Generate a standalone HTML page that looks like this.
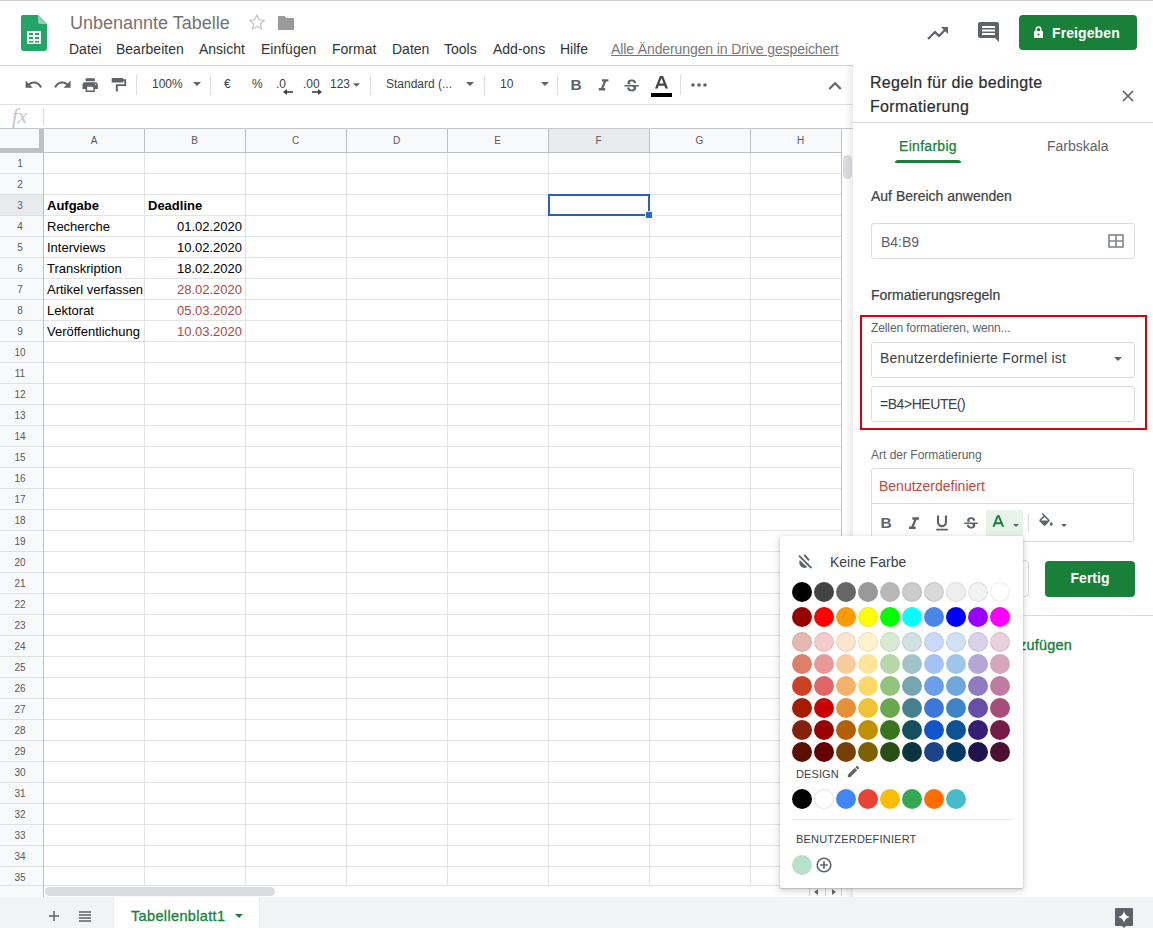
<!DOCTYPE html>
<html><head><meta charset="utf-8">
<style>
*{margin:0;padding:0;box-sizing:border-box}
html,body{width:1153px;height:928px;overflow:hidden;background:#fff;font-family:"Liberation Sans",sans-serif;position:relative}
.a{position:absolute}
.t{position:absolute;white-space:nowrap}
svg{position:absolute;overflow:visible}
</style></head><body>
<!-- top line -->
<div class="a" style="left:0;top:0;width:1153px;height:1px;background:#d0d0d0"></div>

<!-- HEADER -->
<svg style="left:21px;top:15px" width="26" height="36" viewBox="0 0 26 36">
  <path d="M2 0H17L26 9V33A3 3 0 0 1 23 36H3A3 3 0 0 1 0 33V2A2 2 0 0 1 2 0Z" fill="#23a566"/>
  <path d="M17 0L26 9H19A2 2 0 0 1 17 7Z" fill="#8ed1b1"/>
  <rect x="6" y="16" width="14" height="13" fill="#f1f1f1"/>
  <rect x="8" y="18" width="4" height="2" fill="#23a566"/><rect x="14" y="18" width="4" height="2" fill="#23a566"/>
  <rect x="8" y="22" width="4" height="2" fill="#23a566"/><rect x="14" y="22" width="4" height="2" fill="#23a566"/>
  <rect x="8" y="26" width="4" height="1.5" fill="#23a566"/><rect x="14" y="26" width="4" height="1.5" fill="#23a566"/>
</svg>
<div class="t" style="left:70px;top:13px;font-size:18px;color:#737373">Unbenannte Tabelle</div>
<svg style="left:248px;top:13px" width="18" height="18" viewBox="0 0 24 24"><path d="M12 2.5l2.9 6.6 7.1.6-5.4 4.7 1.6 7-6.2-3.7-6.2 3.7 1.6-7L2 9.7l7.1-.6z" fill="none" stroke="#c4c4c4" stroke-width="1.6" stroke-linejoin="round"/></svg>
<svg style="left:278px;top:16px" width="16" height="14" viewBox="0 0 16 14"><path d="M0 0.6A0.6 0.6 0 0 1 0.6 0H6.5L8.3 2H15.4A0.6 0.6 0 0 1 16 2.6V13.4A0.6 0.6 0 0 1 15.4 14H0.6A0.6 0.6 0 0 1 0 13.4Z" fill="#9a9a9a"/></svg>

<div class="t" style="left:69px;top:41px;font-size:14px;color:#333">Datei</div>
<div class="t" style="left:116px;top:41px;font-size:14px;color:#333">Bearbeiten</div>
<div class="t" style="left:199px;top:41px;font-size:14px;color:#333">Ansicht</div>
<div class="t" style="left:261px;top:41px;font-size:14px;color:#333">Einfügen</div>
<div class="t" style="left:332px;top:41px;font-size:14px;color:#333">Format</div>
<div class="t" style="left:392px;top:41px;font-size:14px;color:#333">Daten</div>
<div class="t" style="left:444px;top:41px;font-size:14px;color:#333">Tools</div>
<div class="t" style="left:493px;top:41px;font-size:14px;color:#333">Add-ons</div>
<div class="t" style="left:560px;top:41px;font-size:14px;color:#333">Hilfe</div>
<div class="t" style="left:611px;top:41px;font-size:14px;color:#777;letter-spacing:-0.1px;text-decoration:underline">Alle Änderungen in Drive gespeichert</div>

<!-- right header icons -->
<svg style="left:927px;top:26px" width="22" height="14" viewBox="0 0 22 14"><path d="M1 13L8 6L12 10L19 3" stroke="#5f6368" stroke-width="2.2" fill="none"/><path d="M14 1H21V8Z" fill="#5f6368"/></svg>
<svg style="left:978px;top:22px" width="21" height="20" viewBox="0 0 21 20"><path d="M2 0H19A2 2 0 0 1 21 2V20L17 16H2A2 2 0 0 1 0 14V2A2 2 0 0 1 2 0Z" fill="#5f6368"/><rect x="4" y="4" width="13" height="2" fill="#fff"/><rect x="4" y="7.5" width="13" height="2" fill="#fff"/><rect x="4" y="11" width="13" height="2" fill="#fff"/></svg>
<div class="a" style="left:1019px;top:15px;width:118px;height:35px;background:#188038;border-radius:4px"></div>
<svg style="left:1034px;top:26px" width="9" height="12" viewBox="0 0 9 12"><path d="M2.2 5V3.3A2.3 2.3 0 0 1 6.8 3.3V5" stroke="#fff" stroke-width="1.5" fill="none"/><rect x="0" y="5" width="9" height="7" rx="0.8" fill="#fff"/><circle cx="4.5" cy="8.5" r="1.1" fill="#188038"/></svg>
<div class="t" style="left:1052px;top:25px;font-size:14px;font-weight:bold;letter-spacing:0.1px;color:#fff">Freigeben</div>

<!-- header bottom line -->
<div class="a" style="left:0;top:65px;width:1153px;height:1px;background:#d5d5d5"></div>

<!-- TOOLBAR -->
<!-- undo -->
<svg style="left:24px;top:75px" width="19.2" height="19.2" viewBox="0 0 24 24"><path fill="#5f6368" d="M12.5 8c-2.65 0-5.05.99-6.9 2.6L2 7v9h9l-3.62-3.62c1.39-1.160 3.16-1.88 5.12-1.88 3.54 0 6.55 2.31 7.6 5.5l2.37-.78C21.08 11.03 17.15 8 12.5 8z"/></svg>
<!-- redo -->
<svg style="left:53px;top:75px" width="19.2" height="19.2" viewBox="0 0 24 24"><path fill="#5f6368" d="M18.4 10.6C16.55 8.99 14.150 8 11.5 8c-4.65 0-8.58 3.03-9.96 7.22L3.9 16c1.05-3.19 4.05-5.5 7.6-5.5 1.95 0 3.73.72 5.12 1.88L13 16h9V7l-3.6 3.6z"/></svg>
<!-- print -->
<svg style="left:80.8px;top:75.8px" width="18.4" height="18.4" viewBox="0 0 24 24"><path fill="#5f6368" d="M19 8H5c-1.66 0-3 1.34-3 3v6h4v4h12v-4h4v-6c0-1.66-1.34-3-3-3zm-3 11H8v-5h8v5zm3-7c-.55 0-1-.45-1-1s.45-1 1-1 1 .45 1 1-.45 1-1 1zm-1-9H6v4h12V3z"/></svg>
<!-- paint format -->
<svg style="left:111px;top:77px" width="16" height="16" viewBox="0 0 16 16"><rect x="0.7" y="1" width="11.6" height="4.6" rx="0.6" fill="#5f6368"/><path d="M12 3.2H14.2V8.2H5.8V9" stroke="#5f6368" stroke-width="1.8" fill="none"/><rect x="4.8" y="8.2" width="2" height="6.3" fill="#5f6368"/></svg>
<div class="a" style="left:136px;top:75px;width:1px;height:20px;background:#dadce0"></div>
<div class="t" style="left:152px;top:77px;font-size:12px;color:#3c4043">100%</div>
<svg style="left:193px;top:82px" width="8" height="4" viewBox="0 0 10 5"><path d="M0 0L5 5L10 0Z" fill="#5f6368"/></svg>
<div class="a" style="left:210px;top:75px;width:1px;height:20px;background:#dadce0"></div>
<div class="t" style="left:224px;top:77px;font-size:12px;color:#3c4043">€</div>
<div class="t" style="left:252px;top:77px;font-size:12px;color:#3c4043">%</div>
<div class="t" style="left:276px;top:77px;font-size:12px;color:#3c4043">.0</div>
<svg style="left:283px;top:89px" width="10" height="6" viewBox="0 0 10 6"><path d="M10 3H3" stroke="#3c4043" stroke-width="1.6"/><path d="M0 3L4 0V6Z" fill="#3c4043"/></svg>
<div class="t" style="left:303px;top:77px;font-size:12px;color:#3c4043">.00</div>
<svg style="left:312px;top:89px" width="10" height="6" viewBox="0 0 10 6"><path d="M0 3H7" stroke="#3c4043" stroke-width="1.6"/><path d="M10 3L6 0V6Z" fill="#3c4043"/></svg>
<div class="t" style="left:330px;top:77px;font-size:12px;color:#3c4043">123</div>
<svg style="left:353px;top:83px" width="7" height="4" viewBox="0 0 10 5"><path d="M0 0L5 5L10 0Z" fill="#5f6368"/></svg>
<div class="a" style="left:370px;top:75px;width:1px;height:20px;background:#dadce0"></div>
<div class="t" style="left:386px;top:77px;font-size:12px;color:#3c4043">Standard (...</div>
<svg style="left:466px;top:82px" width="8" height="4" viewBox="0 0 10 5"><path d="M0 0L5 5L10 0Z" fill="#5f6368"/></svg>
<div class="a" style="left:484px;top:75px;width:1px;height:20px;background:#dadce0"></div>
<div class="t" style="left:500px;top:77px;font-size:12px;color:#3c4043">10</div>
<svg style="left:541px;top:82px" width="8" height="4" viewBox="0 0 10 5"><path d="M0 0L5 5L10 0Z" fill="#5f6368"/></svg>
<div class="a" style="left:557px;top:75px;width:1px;height:20px;background:#dadce0"></div>
<!-- B -->
<div class="t" style="left:570.5px;top:75.5px;font-size:15.5px;font-weight:bold;line-height:18px;color:#5f6368">B</div>
<!-- I -->
<svg style="left:594px;top:76px" width="19.2" height="19.2" viewBox="0 0 24 24"><path fill="#5f6368" d="M10 4v3h2.21l-3.42 8H6v3h8v-3h-2.21l3.42-8H18V4z"/></svg>
<!-- S -->
<svg style="left:622px;top:76.5px" width="19.2" height="19.2" viewBox="0 0 24 24"><path fill="#5f6368" d="M7.24 8.75c-.26-.48-.39-1.03-.39-1.670 0-.61.13-1.16.4-1.67.26-.5.63-.93 1.11-1.29.48-.35 1.05-.63 1.7-.83.66-.19 1.39-.29 2.18-.29.81 0 1.54.11 2.21.34.66.22 1.23.54 1.69.94.47.4.83.88 1.08 1.43.25.55.38 1.15.38 1.81h-3.01c0-.31-.05-.59-.15-.85-.09-.27-.24-.49-.44-.68-.2-.19-.45-.33-.75-.44-.3-.1-.66-.16-1.06-.16-.39 0-.74.04-1.030.13-.29.09-.53.21-.72.36-.19.16-.34.34-.44.55-.1.21-.15.43-.15.66 0 .48.25.88.74 1.21.38.25.77.48 1.41.7H7.39c-.05-.08-.11-.17-.15-.25zM21 12v-2H3v2h9.62c.18.07.4.14.55.2.37.17.66.34.87.51.21.17.35.36.43.57.07.2.11.43.11.69 0 .23-.05.45-.14.66-.09.2-.23.38-.42.53-.19.15-.42.26-.71.35-.29.08-.63.13-1.01.13-.43 0-.83-.04-1.18-.13s-.66-.23-.91-.42c-.25-.19-.45-.44-.59-.75-.14-.31-.25-.76-.25-1.21H6.4c0 .55.08 1.13.24 1.58.16.45.37.85.65 1.21.28.35.6.66.98.92.37.26.78.48 1.22.65.44.17.9.3 1.38.39.48.08.96.13 1.44.13.8 0 1.53-.09 2.18-.28s1.21-.45 1.67-.79c.46-.34.82-.77 1.07-1.27s.38-1.07.38-1.71c0-.6-.1-1.14-.31-1.61-.05-.11-.11-.23-.17-.33H21z"/></svg>
<!-- A text color -->
<svg style="left:651px;top:76px" width="21" height="21" viewBox="0 0 21 21"><path fill="#444" d="M8.9 0L4 12.5h2.6l1-2.8h5.8l1 2.8h2.6L12.1 0zM8.3 7.6L10.5 1.9 12.7 7.6z"/><rect x="0" y="17" width="21" height="4" fill="#000"/></svg>
<div class="a" style="left:680px;top:75px;width:1px;height:20px;background:#dadce0"></div>
<svg style="left:691px;top:83px" width="16" height="4" viewBox="0 0 16 4"><circle cx="2" cy="2" r="1.8" fill="#5f6368"/><circle cx="8" cy="2" r="1.8" fill="#5f6368"/><circle cx="14" cy="2" r="1.8" fill="#5f6368"/></svg>
<!-- chevron up -->
<svg style="left:821.5px;top:73px" width="26" height="26" viewBox="0 0 24 24"><path fill="#5f6368" d="M12 8l-6 6 1.41 1.41L12 10.83l4.59 4.58L18 14z"/></svg>

<div class="a" style="left:0;top:104px;width:853px;height:1px;background:#e0e0e0"></div>

<!-- FORMULA BAR -->
<div class="t" style="left:12px;top:104px;font-size:21px;font-style:italic;font-family:'Liberation Serif',serif;color:#c6c6c6">fx</div>
<div class="a" style="left:43px;top:108px;width:1px;height:18px;background:#dadce0"></div>
<div class="a" style="left:0;top:128px;width:853px;height:1px;background:#c8c8c8"></div>

<!-- GRID -->
<div class="a" style="left:0;top:129px;width:841px;height:23px;background:#f8f9fa"></div>
<div class="a" style="left:0;top:152px;width:44px;height:745px;background:#f8f9fa"></div>
<div class="a" style="left:549px;top:129px;width:100px;height:23px;background:#e8eaed"></div>
<div class="a" style="left:0;top:195px;width:43px;height:20px;background:#e8eaed"></div>
<div class="a" style="left:0;top:173px;width:44px;height:1px;background:#e0e0e0"></div>
<div class="a" style="left:44px;top:173px;width:797px;height:1px;background:#e2e3e3"></div>
<div class="a" style="left:0;top:194px;width:44px;height:1px;background:#e0e0e0"></div>
<div class="a" style="left:44px;top:194px;width:797px;height:1px;background:#e2e3e3"></div>
<div class="a" style="left:0;top:215px;width:44px;height:1px;background:#e0e0e0"></div>
<div class="a" style="left:44px;top:215px;width:797px;height:1px;background:#e2e3e3"></div>
<div class="a" style="left:0;top:236px;width:44px;height:1px;background:#e0e0e0"></div>
<div class="a" style="left:44px;top:236px;width:797px;height:1px;background:#e2e3e3"></div>
<div class="a" style="left:0;top:257px;width:44px;height:1px;background:#e0e0e0"></div>
<div class="a" style="left:44px;top:257px;width:797px;height:1px;background:#e2e3e3"></div>
<div class="a" style="left:0;top:278px;width:44px;height:1px;background:#e0e0e0"></div>
<div class="a" style="left:44px;top:278px;width:797px;height:1px;background:#e2e3e3"></div>
<div class="a" style="left:0;top:299px;width:44px;height:1px;background:#e0e0e0"></div>
<div class="a" style="left:44px;top:299px;width:797px;height:1px;background:#e2e3e3"></div>
<div class="a" style="left:0;top:320px;width:44px;height:1px;background:#e0e0e0"></div>
<div class="a" style="left:44px;top:320px;width:797px;height:1px;background:#e2e3e3"></div>
<div class="a" style="left:0;top:341px;width:44px;height:1px;background:#e0e0e0"></div>
<div class="a" style="left:44px;top:341px;width:797px;height:1px;background:#e2e3e3"></div>
<div class="a" style="left:0;top:362px;width:44px;height:1px;background:#e0e0e0"></div>
<div class="a" style="left:44px;top:362px;width:797px;height:1px;background:#e2e3e3"></div>
<div class="a" style="left:0;top:383px;width:44px;height:1px;background:#e0e0e0"></div>
<div class="a" style="left:44px;top:383px;width:797px;height:1px;background:#e2e3e3"></div>
<div class="a" style="left:0;top:404px;width:44px;height:1px;background:#e0e0e0"></div>
<div class="a" style="left:44px;top:404px;width:797px;height:1px;background:#e2e3e3"></div>
<div class="a" style="left:0;top:425px;width:44px;height:1px;background:#e0e0e0"></div>
<div class="a" style="left:44px;top:425px;width:797px;height:1px;background:#e2e3e3"></div>
<div class="a" style="left:0;top:446px;width:44px;height:1px;background:#e0e0e0"></div>
<div class="a" style="left:44px;top:446px;width:797px;height:1px;background:#e2e3e3"></div>
<div class="a" style="left:0;top:467px;width:44px;height:1px;background:#e0e0e0"></div>
<div class="a" style="left:44px;top:467px;width:797px;height:1px;background:#e2e3e3"></div>
<div class="a" style="left:0;top:488px;width:44px;height:1px;background:#e0e0e0"></div>
<div class="a" style="left:44px;top:488px;width:797px;height:1px;background:#e2e3e3"></div>
<div class="a" style="left:0;top:509px;width:44px;height:1px;background:#e0e0e0"></div>
<div class="a" style="left:44px;top:509px;width:797px;height:1px;background:#e2e3e3"></div>
<div class="a" style="left:0;top:530px;width:44px;height:1px;background:#e0e0e0"></div>
<div class="a" style="left:44px;top:530px;width:797px;height:1px;background:#e2e3e3"></div>
<div class="a" style="left:0;top:551px;width:44px;height:1px;background:#e0e0e0"></div>
<div class="a" style="left:44px;top:551px;width:797px;height:1px;background:#e2e3e3"></div>
<div class="a" style="left:0;top:572px;width:44px;height:1px;background:#e0e0e0"></div>
<div class="a" style="left:44px;top:572px;width:797px;height:1px;background:#e2e3e3"></div>
<div class="a" style="left:0;top:593px;width:44px;height:1px;background:#e0e0e0"></div>
<div class="a" style="left:44px;top:593px;width:797px;height:1px;background:#e2e3e3"></div>
<div class="a" style="left:0;top:614px;width:44px;height:1px;background:#e0e0e0"></div>
<div class="a" style="left:44px;top:614px;width:797px;height:1px;background:#e2e3e3"></div>
<div class="a" style="left:0;top:635px;width:44px;height:1px;background:#e0e0e0"></div>
<div class="a" style="left:44px;top:635px;width:797px;height:1px;background:#e2e3e3"></div>
<div class="a" style="left:0;top:656px;width:44px;height:1px;background:#e0e0e0"></div>
<div class="a" style="left:44px;top:656px;width:797px;height:1px;background:#e2e3e3"></div>
<div class="a" style="left:0;top:677px;width:44px;height:1px;background:#e0e0e0"></div>
<div class="a" style="left:44px;top:677px;width:797px;height:1px;background:#e2e3e3"></div>
<div class="a" style="left:0;top:698px;width:44px;height:1px;background:#e0e0e0"></div>
<div class="a" style="left:44px;top:698px;width:797px;height:1px;background:#e2e3e3"></div>
<div class="a" style="left:0;top:719px;width:44px;height:1px;background:#e0e0e0"></div>
<div class="a" style="left:44px;top:719px;width:797px;height:1px;background:#e2e3e3"></div>
<div class="a" style="left:0;top:740px;width:44px;height:1px;background:#e0e0e0"></div>
<div class="a" style="left:44px;top:740px;width:797px;height:1px;background:#e2e3e3"></div>
<div class="a" style="left:0;top:761px;width:44px;height:1px;background:#e0e0e0"></div>
<div class="a" style="left:44px;top:761px;width:797px;height:1px;background:#e2e3e3"></div>
<div class="a" style="left:0;top:782px;width:44px;height:1px;background:#e0e0e0"></div>
<div class="a" style="left:44px;top:782px;width:797px;height:1px;background:#e2e3e3"></div>
<div class="a" style="left:0;top:803px;width:44px;height:1px;background:#e0e0e0"></div>
<div class="a" style="left:44px;top:803px;width:797px;height:1px;background:#e2e3e3"></div>
<div class="a" style="left:0;top:824px;width:44px;height:1px;background:#e0e0e0"></div>
<div class="a" style="left:44px;top:824px;width:797px;height:1px;background:#e2e3e3"></div>
<div class="a" style="left:0;top:845px;width:44px;height:1px;background:#e0e0e0"></div>
<div class="a" style="left:44px;top:845px;width:797px;height:1px;background:#e2e3e3"></div>
<div class="a" style="left:0;top:866px;width:44px;height:1px;background:#e0e0e0"></div>
<div class="a" style="left:44px;top:866px;width:797px;height:1px;background:#e2e3e3"></div>
<div class="a" style="left:0;top:885px;width:44px;height:1px;background:#e0e0e0"></div>
<div class="a" style="left:44px;top:885px;width:797px;height:1px;background:#e2e3e3"></div>
<div class="a" style="left:144px;top:129px;width:1px;height:23px;background:#c0c0c0"></div>
<div class="a" style="left:144px;top:152px;width:1px;height:733px;background:#e2e3e3"></div>
<div class="a" style="left:245px;top:129px;width:1px;height:23px;background:#c0c0c0"></div>
<div class="a" style="left:245px;top:152px;width:1px;height:733px;background:#e2e3e3"></div>
<div class="a" style="left:346px;top:129px;width:1px;height:23px;background:#c0c0c0"></div>
<div class="a" style="left:346px;top:152px;width:1px;height:733px;background:#e2e3e3"></div>
<div class="a" style="left:447px;top:129px;width:1px;height:23px;background:#c0c0c0"></div>
<div class="a" style="left:447px;top:152px;width:1px;height:733px;background:#e2e3e3"></div>
<div class="a" style="left:548px;top:129px;width:1px;height:23px;background:#c0c0c0"></div>
<div class="a" style="left:548px;top:152px;width:1px;height:733px;background:#e2e3e3"></div>
<div class="a" style="left:649px;top:129px;width:1px;height:23px;background:#c0c0c0"></div>
<div class="a" style="left:649px;top:152px;width:1px;height:733px;background:#e2e3e3"></div>
<div class="a" style="left:750px;top:129px;width:1px;height:23px;background:#c0c0c0"></div>
<div class="a" style="left:750px;top:152px;width:1px;height:733px;background:#e2e3e3"></div>
<div class="a" style="left:841px;top:129px;width:1px;height:756px;background:#c0c0c0"></div>
<div class="a" style="left:43px;top:129px;width:1px;height:768px;background:#c0c0c0"></div>
<div class="a" style="left:0;top:152px;width:853px;height:1px;background:#c0c0c0"></div>
<div class="a" style="left:39px;top:129px;width:4px;height:23px;background:#c0c0c0"></div>
<div class="a" style="left:0;top:148px;width:43px;height:4px;background:#c0c0c0"></div>
<div class="t" style="left:44px;top:135px;width:100px;text-align:center;font-size:10px;color:#5a5a5a">A</div>
<div class="t" style="left:144px;top:135px;width:101px;text-align:center;font-size:10px;color:#5a5a5a">B</div>
<div class="t" style="left:245px;top:135px;width:101px;text-align:center;font-size:10px;color:#5a5a5a">C</div>
<div class="t" style="left:346px;top:135px;width:101px;text-align:center;font-size:10px;color:#5a5a5a">D</div>
<div class="t" style="left:447px;top:135px;width:101px;text-align:center;font-size:10px;color:#5a5a5a">E</div>
<div class="t" style="left:548px;top:135px;width:101px;text-align:center;font-size:10px;color:#5a5a5a">F</div>
<div class="t" style="left:649px;top:135px;width:101px;text-align:center;font-size:10px;color:#5a5a5a">G</div>
<div class="t" style="left:750px;top:135px;width:101px;text-align:center;font-size:10px;color:#5a5a5a">H</div>
<div class="t" style="left:0;top:158px;width:40px;text-align:center;font-size:10px;color:#5a5a5a">1</div>
<div class="t" style="left:0;top:179px;width:40px;text-align:center;font-size:10px;color:#5a5a5a">2</div>
<div class="t" style="left:0;top:200px;width:40px;text-align:center;font-size:10px;color:#5a5a5a">3</div>
<div class="t" style="left:0;top:221px;width:40px;text-align:center;font-size:10px;color:#5a5a5a">4</div>
<div class="t" style="left:0;top:242px;width:40px;text-align:center;font-size:10px;color:#5a5a5a">5</div>
<div class="t" style="left:0;top:263px;width:40px;text-align:center;font-size:10px;color:#5a5a5a">6</div>
<div class="t" style="left:0;top:284px;width:40px;text-align:center;font-size:10px;color:#5a5a5a">7</div>
<div class="t" style="left:0;top:305px;width:40px;text-align:center;font-size:10px;color:#5a5a5a">8</div>
<div class="t" style="left:0;top:326px;width:40px;text-align:center;font-size:10px;color:#5a5a5a">9</div>
<div class="t" style="left:0;top:347px;width:40px;text-align:center;font-size:10px;color:#5a5a5a">10</div>
<div class="t" style="left:0;top:368px;width:40px;text-align:center;font-size:10px;color:#5a5a5a">11</div>
<div class="t" style="left:0;top:389px;width:40px;text-align:center;font-size:10px;color:#5a5a5a">12</div>
<div class="t" style="left:0;top:410px;width:40px;text-align:center;font-size:10px;color:#5a5a5a">13</div>
<div class="t" style="left:0;top:431px;width:40px;text-align:center;font-size:10px;color:#5a5a5a">14</div>
<div class="t" style="left:0;top:452px;width:40px;text-align:center;font-size:10px;color:#5a5a5a">15</div>
<div class="t" style="left:0;top:473px;width:40px;text-align:center;font-size:10px;color:#5a5a5a">16</div>
<div class="t" style="left:0;top:494px;width:40px;text-align:center;font-size:10px;color:#5a5a5a">17</div>
<div class="t" style="left:0;top:515px;width:40px;text-align:center;font-size:10px;color:#5a5a5a">18</div>
<div class="t" style="left:0;top:536px;width:40px;text-align:center;font-size:10px;color:#5a5a5a">19</div>
<div class="t" style="left:0;top:557px;width:40px;text-align:center;font-size:10px;color:#5a5a5a">20</div>
<div class="t" style="left:0;top:578px;width:40px;text-align:center;font-size:10px;color:#5a5a5a">21</div>
<div class="t" style="left:0;top:599px;width:40px;text-align:center;font-size:10px;color:#5a5a5a">22</div>
<div class="t" style="left:0;top:620px;width:40px;text-align:center;font-size:10px;color:#5a5a5a">23</div>
<div class="t" style="left:0;top:641px;width:40px;text-align:center;font-size:10px;color:#5a5a5a">24</div>
<div class="t" style="left:0;top:662px;width:40px;text-align:center;font-size:10px;color:#5a5a5a">25</div>
<div class="t" style="left:0;top:683px;width:40px;text-align:center;font-size:10px;color:#5a5a5a">26</div>
<div class="t" style="left:0;top:704px;width:40px;text-align:center;font-size:10px;color:#5a5a5a">27</div>
<div class="t" style="left:0;top:725px;width:40px;text-align:center;font-size:10px;color:#5a5a5a">28</div>
<div class="t" style="left:0;top:746px;width:40px;text-align:center;font-size:10px;color:#5a5a5a">29</div>
<div class="t" style="left:0;top:767px;width:40px;text-align:center;font-size:10px;color:#5a5a5a">30</div>
<div class="t" style="left:0;top:788px;width:40px;text-align:center;font-size:10px;color:#5a5a5a">31</div>
<div class="t" style="left:0;top:809px;width:40px;text-align:center;font-size:10px;color:#5a5a5a">32</div>
<div class="t" style="left:0;top:830px;width:40px;text-align:center;font-size:10px;color:#5a5a5a">33</div>
<div class="t" style="left:0;top:851px;width:40px;text-align:center;font-size:10px;color:#5a5a5a">34</div>
<div class="t" style="left:0;top:872px;width:40px;text-align:center;font-size:10px;color:#5a5a5a">35</div>
<div class="t" style="left:47px;top:198px;font-size:13px;font-weight:bold;color:#000">Aufgabe</div>
<div class="t" style="left:148px;top:198px;font-size:13px;font-weight:bold;color:#000">Deadline</div>
<div class="t" style="left:47px;top:219px;font-size:13px;color:#000">Recherche</div>
<div class="t" style="left:145px;top:219px;width:97px;text-align:right;font-size:13px;color:#000">01.02.2020</div>
<div class="t" style="left:47px;top:240px;font-size:13px;color:#000">Interviews</div>
<div class="t" style="left:145px;top:240px;width:97px;text-align:right;font-size:13px;color:#000">10.02.2020</div>
<div class="t" style="left:47px;top:261px;font-size:13px;color:#000">Transkription</div>
<div class="t" style="left:145px;top:261px;width:97px;text-align:right;font-size:13px;color:#000">18.02.2020</div>
<div class="t" style="left:47px;top:282px;font-size:13px;color:#000">Artikel verfassen</div>
<div class="t" style="left:145px;top:282px;width:97px;text-align:right;font-size:13px;color:#a94a44">28.02.2020</div>
<div class="t" style="left:47px;top:303px;font-size:13px;color:#000">Lektorat</div>
<div class="t" style="left:145px;top:303px;width:97px;text-align:right;font-size:13px;color:#a94a44">05.03.2020</div>
<div class="t" style="left:47px;top:324px;font-size:13px;color:#000">Veröffentlichung</div>
<div class="t" style="left:145px;top:324px;width:97px;text-align:right;font-size:13px;color:#a94a44">10.03.2020</div>
<div class="a" style="left:548px;top:194px;width:102px;height:22px;border:2px solid #2760c2"></div>
<div class="a" style="left:645px;top:211px;width:8px;height:8px;background:#2866d0;border:1px solid #fff"></div>
<div class="a" style="left:44px;top:886px;width:797px;height:11px;background:#fff"></div>
<div class="a" style="left:45px;top:887px;width:230px;height:9px;background:#dadce0;border-radius:5px"></div>
<div class="a" style="left:842px;top:152px;width:11px;height:745px;background:#fff"></div>
<div class="a" style="left:843px;top:155px;width:9px;height:24px;background:#dadce0;border-radius:5px"></div>
<div class="a" style="left:809px;top:887px;width:1px;height:9px;background:#d0d0d0"></div>
<div class="a" style="left:825px;top:887px;width:1px;height:9px;background:#d0d0d0"></div>
<div class="a" style="left:841px;top:887px;width:1px;height:9px;background:#d0d0d0"></div>
<svg style="left:814px;top:889px" width="4" height="6" viewBox="0 0 4 6"><path d="M4 0V6L0 3Z" fill="#666"/></svg>
<svg style="left:832px;top:889px" width="4" height="6" viewBox="0 0 4 6"><path d="M0 0V6L4 3Z" fill="#666"/></svg>

<!-- BOTTOM BAR -->
<div class="a" style="left:0;top:897px;width:1153px;height:31px;background:#f1f3f4"></div>

<!-- SIDE PANEL -->
<!-- panel bg -->
<div class="a" style="left:853px;top:65px;width:300px;height:832px;background:#fff"></div>
<div class="a" style="left:845px;top:65px;width:8px;height:832px;background:linear-gradient(to right,rgba(0,0,0,0),rgba(0,0,0,0.075))"></div>
<div class="t" style="left:870px;top:71px;font-size:16px;line-height:24px;letter-spacing:0.3px;-webkit-text-stroke:0.2px #2a2d30;color:#2a2d30">Regeln für die bedingte</div>
<div class="t" style="left:870px;top:95px;font-size:16px;line-height:24px;letter-spacing:0.35px;-webkit-text-stroke:0.2px #2a2d30;color:#2a2d30">Formatierung</div>
<svg style="left:1122px;top:90px" width="12" height="12" viewBox="0 0 12 12"><path d="M1 1L11 11M11 1L1 11" stroke="#5f6368" stroke-width="1.7"/></svg>
<div class="a" style="left:851px;top:122px;width:302px;height:1px;background:#dadce0"></div>
<div class="t" style="left:899px;top:138px;font-size:14px;letter-spacing:0.3px;-webkit-text-stroke:0.25px #188038;color:#188038">Einfarbig</div>
<div class="a" style="left:895px;top:160px;width:66px;height:3px;background:#188038;border-radius:3px 3px 0 0"></div>
<div class="t" style="left:1047px;top:138px;font-size:14px;color:#5f6368">Farbskala</div>

<div class="t" style="left:871px;top:188px;font-size:14px;-webkit-text-stroke:0.2px #3c4043;color:#3c4043">Auf Bereich anwenden</div>
<div class="a" style="left:871px;top:223px;width:264px;height:36px;border:1px solid #dadce0;border-radius:3px"></div>
<div class="t" style="left:881px;top:234px;font-size:14px;color:#5f6368">B4:B9</div>
<svg style="left:1108px;top:234px" width="16" height="14" viewBox="0 0 16 14"><rect x="1" y="1" width="14" height="12" stroke="#80868b" stroke-width="1.6" fill="none"/><path d="M8 1V13M1 7H15" stroke="#80868b" stroke-width="1.6"/></svg>

<div class="t" style="left:871px;top:287px;font-size:14px;-webkit-text-stroke:0.2px #3c4043;color:#3c4043">Formatierungsregeln</div>

<div class="t" style="left:871px;top:321px;font-size:12px;color:#5f6368;letter-spacing:-0.1px">Zellen formatieren, wenn...</div>
<div class="a" style="left:871px;top:342px;width:264px;height:36px;border:1px solid #dadce0;border-radius:3px"></div>
<div class="t" style="left:880px;top:350px;font-size:14px;letter-spacing:0.25px;color:#3c4043">Benutzerdefinierte Formel ist</div>
<svg style="left:1114px;top:357px" width="8" height="4" viewBox="0 0 10 5"><path d="M0 0L5 5L10 0Z" fill="#5f6368"/></svg>
<div class="a" style="left:871px;top:386px;width:264px;height:36px;border:1px solid #dadce0;border-radius:3px"></div>
<div class="t" style="left:880px;top:396px;font-size:14px;letter-spacing:-0.45px;color:#3c4043">=B4&gt;HEUTE()</div>
<!-- red annotation box -->
<div class="a" style="left:859.5px;top:315px;width:287px;height:115px;border:2.5px solid #d8000f"></div>

<div class="t" style="left:871px;top:448px;font-size:12px;color:#5f6368">Art der Formatierung</div>
<div class="a" style="left:871px;top:468px;width:263px;height:74px;border:1px solid #dadce0;border-radius:3px"></div>
<div class="t" style="left:879px;top:478px;font-size:14px;color:#c5473c">Benutzerdefiniert</div>
<div class="a" style="left:871px;top:503px;width:263px;height:1px;background:#dadce0"></div>
<!-- B I U S -->
<div class="t" style="left:880.5px;top:514px;font-size:15.5px;font-weight:bold;line-height:18px;color:#5f6368">B</div>
<svg style="left:904.2px;top:514.4px" width="20" height="20" viewBox="0 0 24 24"><path fill="#5f6368" d="M10 4v3h2.21l-3.42 8H6v3h8v-3h-2.21l3.42-8H18V4z"/></svg>
<svg style="left:932.3px;top:513.4px" width="20" height="20" viewBox="0 0 24 24"><path fill="#5f6368" d="M12 17c3.31 0 6-2.69 6-6V3h-2.5v8c0 1.93-1.57 3.5-3.5 3.5S8.5 12.93 8.5 11V3H6v8c0 3.31 2.69 6 6 6zm-7 2v2h14v-2H5z"/></svg>
<svg style="left:961.5px;top:514.7px" width="18" height="18" viewBox="0 0 24 24"><path fill="#5f6368" d="M7.24 8.75c-.26-.48-.39-1.03-.39-1.67 0-.61.13-1.16.4-1.67.26-.5.63-.93 1.11-1.29.48-.35 1.05-.63 1.7-.83.66-.19 1.39-.29 2.18-.29.81 0 1.54.11 2.21.34.66.22 1.23.54 1.69.94.47.4.83.88 1.08 1.43.25.55.38 1.150.38 1.81h-3.01c0-.31-.05-.59-.15-.85-.09-.27-.24-.49-.44-.68-.2-.19-.45-.33-.75-.44-.3-.1-.66-.16-1.06-.16-.39 0-.74.04-1.03.13-.29.09-.53.21-.72.36-.19.16-.34.34-.44.55-.1.21-.15.43-.15.66 0 .48.25.88.74 1.21.38.25.77.48 1.41.7H7.39c-.05-.08-.11-.17-.15-.25zM21 12v-2H3v2h9.62c.18.07.4.14.55.2.37.17.66.34.87.51.21.17.35.36.43.57.07.2.11.43.11.69 0 .23-.05.45-.14.66-.09.2-.23.38-.42.53-.19.15-.42.26-.71.35-.29.08-.63.13-1.01.13-.43 0-.83-.04-1.18-.13s-.66-.23-.91-.42c-.25-.19-.45-.44-.59-.75-.14-.31-.25-.76-.25-1.21H6.4c0 .55.08 1.13.24 1.58.16.45.37.85.65 1.21.28.35.6.66.98.92.37.26.78.48 1.22.65.44.17.9.3 1.38.39.48.08.96.13 1.44.13.8 0 1.53-.09 2.18-.28s1.21-.45 1.67-.79c.46-.34.82-.77 1.07-1.270s.38-1.07.38-1.71c0-.6-.1-1.14-.31-1.61-.05-.11-.11-.23-.17-.33H21z"/></svg>
<!-- A active -->
<div class="a" style="left:986px;top:510px;width:37px;height:27px;background:#e6f4ea"></div>
<svg style="left:992px;top:515px" width="12.5" height="12" viewBox="0 0 13 12"><path fill="#188038" d="M5.2 0L0.4 12h2.3l1-2.7h5.6l1 2.7h2.3L7.8 0zM4.4 7.4L6.5 2 8.6 7.4z"/></svg>
<svg style="left:1013px;top:524px" width="6" height="3" viewBox="0 0 10 5"><path d="M0 0L5 5L10 0Z" fill="#5f6368"/></svg>
<div class="a" style="left:1028px;top:514px;width:1px;height:18px;background:#dadce0"></div>
<!-- paint bucket -->
<svg style="left:1037px;top:513px" width="18" height="18" viewBox="0 0 24 24"><path fill="#5f6368" d="M16.56 8.94L7.62 0 6.21 1.41l2.38 2.38-5.15 5.15c-.59.59-.59 1.54 0 2.12l5.5 5.5c.29.29.68.44 1.06.44s.77-.15 1.06-.44l5.5-5.5c.59-.58.59-1.53 0-2.12zM5.21 10L10 5.21 14.79 10H5.21zM19 11.5s-2 2.17-2 3.5c0 1.1.9 2 2 2s2-.9 2-2c0-1.33-2-3.5-2-3.5z"/></svg>
<svg style="left:1061px;top:524px" width="6" height="3" viewBox="0 0 10 5"><path d="M0 0L5 5L10 0Z" fill="#5f6368"/></svg>

<!-- buttons -->
<div class="a" style="left:940px;top:560px;width:89px;height:37px;border:1px solid #dadce0;border-radius:4px;background:#fff"></div>
<div class="a" style="left:1045px;top:561px;width:90px;height:36px;background:#188038;border-radius:4px"></div>
<div class="t" style="left:1045px;top:570px;width:90px;text-align:center;font-size:14px;font-weight:bold;color:#fff">Fertig</div>
<div class="a" style="left:853px;top:615px;width:300px;height:1px;background:#dadce0"></div>
<div class="t" style="left:852px;top:637px;width:220px;text-align:right;font-size:14.5px;letter-spacing:0.2px;-webkit-text-stroke:0.35px #188038;color:#188038">Weitere Regel hinzufügen</div>

<!-- bottom bar items -->
<div class="a" style="left:114px;top:897px;width:145px;height:31px;background:#fff;box-shadow:0 0 1px rgba(0,0,0,0.15)"></div>
<div class="t" style="left:131px;top:908px;font-size:14.5px;letter-spacing:0.35px;-webkit-text-stroke:0.3px #188038;color:#188038">Tabellenblatt1</div>
<svg style="left:235px;top:914px" width="8" height="4" viewBox="0 0 10 5"><path d="M0 0L5 5L10 0Z" fill="#188038"/></svg>
<svg style="left:49px;top:911px" width="10" height="10" viewBox="0 0 10 10"><path d="M5 0V10M0 5H10" stroke="#5f6368" stroke-width="1.5"/></svg>
<svg style="left:79px;top:911px" width="12" height="11" viewBox="0 0 12 11"><path d="M0 1H12M0 4H12M0 7H12M0 10H12" stroke="#5f6368" stroke-width="1.6"/></svg>
<svg style="left:1115px;top:908px" width="18" height="20" viewBox="0 0 18 20"><path d="M1 0H17A1 1 0 0 1 18 1V17A1 1 0 0 1 17 18H11L9 20L7 18H1A1 1 0 0 1 0 17V1A1 1 0 0 1 1 0Z" fill="#5f6368"/><path d="M9 3Q9.8 8.2 15 9Q9.8 9.8 9 15Q8.2 9.8 3 9Q8.2 8.2 9 3Z" fill="#fff"/></svg>


<!-- COLOR PICKER -->
<div class="a" style="left:780px;top:536px;width:243px;height:352px;background:#fff;border-radius:2px;box-shadow:0 2px 6px 2px rgba(60,64,67,0.15),0 1px 2px rgba(60,64,67,0.3)"></div>
<svg style="left:797px;top:554px" width="17" height="16" viewBox="0 0 17 16"><defs><clipPath id="nc"><path d="M0 3.2L13 16H0Z"/></clipPath></defs><circle cx="7.6" cy="8.6" r="5.3" fill="#5f6368" clip-path="url(#nc)"/><path d="M2 1.7L14.5 14.1" stroke="#5f6368" stroke-width="1.9"/><path d="M7.3 0.8L12.1 6.3" stroke="#5f6368" stroke-width="1.9"/></svg>
<div class="t" style="left:830px;top:554px;font-size:14px;color:#3c4043">Keine Farbe</div>
<div class="a" style="left:792px;top:582px;width:20px;height:20px;border-radius:50%;background:#000000;"></div>
<div class="a" style="left:814px;top:582px;width:20px;height:20px;border-radius:50%;background:#434343;"></div>
<div class="a" style="left:836px;top:582px;width:20px;height:20px;border-radius:50%;background:#666666;"></div>
<div class="a" style="left:858px;top:582px;width:20px;height:20px;border-radius:50%;background:#999999;"></div>
<div class="a" style="left:880px;top:582px;width:20px;height:20px;border-radius:50%;background:#b7b7b7;"></div>
<div class="a" style="left:902px;top:582px;width:20px;height:20px;border-radius:50%;background:#cccccc;box-shadow:inset 0 0 0 1px rgba(0,0,0,0.08);"></div>
<div class="a" style="left:924px;top:582px;width:20px;height:20px;border-radius:50%;background:#d9d9d9;box-shadow:inset 0 0 0 1px rgba(0,0,0,0.08);"></div>
<div class="a" style="left:946px;top:582px;width:20px;height:20px;border-radius:50%;background:#efefef;box-shadow:inset 0 0 0 1px rgba(0,0,0,0.08);"></div>
<div class="a" style="left:968px;top:582px;width:20px;height:20px;border-radius:50%;background:#f3f3f3;box-shadow:inset 0 0 0 1px rgba(0,0,0,0.08);"></div>
<div class="a" style="left:990px;top:582px;width:20px;height:20px;border-radius:50%;background:#ffffff;box-shadow:inset 0 0 0 1px rgba(0,0,0,0.08);"></div>
<div class="a" style="left:792px;top:607px;width:20px;height:20px;border-radius:50%;background:#980000;"></div>
<div class="a" style="left:814px;top:607px;width:20px;height:20px;border-radius:50%;background:#ff0000;"></div>
<div class="a" style="left:836px;top:607px;width:20px;height:20px;border-radius:50%;background:#ff9900;"></div>
<div class="a" style="left:858px;top:607px;width:20px;height:20px;border-radius:50%;background:#ffff00;box-shadow:inset 0 0 0 1px rgba(0,0,0,0.08);"></div>
<div class="a" style="left:880px;top:607px;width:20px;height:20px;border-radius:50%;background:#00ff00;"></div>
<div class="a" style="left:902px;top:607px;width:20px;height:20px;border-radius:50%;background:#00ffff;"></div>
<div class="a" style="left:924px;top:607px;width:20px;height:20px;border-radius:50%;background:#4a86e8;"></div>
<div class="a" style="left:946px;top:607px;width:20px;height:20px;border-radius:50%;background:#0000ff;"></div>
<div class="a" style="left:968px;top:607px;width:20px;height:20px;border-radius:50%;background:#9900ff;"></div>
<div class="a" style="left:990px;top:607px;width:20px;height:20px;border-radius:50%;background:#ff00ff;"></div>
<div class="a" style="left:792px;top:632px;width:20px;height:20px;border-radius:50%;background:#e6b8af;box-shadow:inset 0 0 0 1px rgba(0,0,0,0.08);"></div>
<div class="a" style="left:814px;top:632px;width:20px;height:20px;border-radius:50%;background:#f4cccc;box-shadow:inset 0 0 0 1px rgba(0,0,0,0.08);"></div>
<div class="a" style="left:836px;top:632px;width:20px;height:20px;border-radius:50%;background:#fce5cd;box-shadow:inset 0 0 0 1px rgba(0,0,0,0.08);"></div>
<div class="a" style="left:858px;top:632px;width:20px;height:20px;border-radius:50%;background:#fff2cc;box-shadow:inset 0 0 0 1px rgba(0,0,0,0.08);"></div>
<div class="a" style="left:880px;top:632px;width:20px;height:20px;border-radius:50%;background:#d9ead3;box-shadow:inset 0 0 0 1px rgba(0,0,0,0.08);"></div>
<div class="a" style="left:902px;top:632px;width:20px;height:20px;border-radius:50%;background:#d0e0e3;box-shadow:inset 0 0 0 1px rgba(0,0,0,0.08);"></div>
<div class="a" style="left:924px;top:632px;width:20px;height:20px;border-radius:50%;background:#c9daf8;box-shadow:inset 0 0 0 1px rgba(0,0,0,0.08);"></div>
<div class="a" style="left:946px;top:632px;width:20px;height:20px;border-radius:50%;background:#cfe2f3;box-shadow:inset 0 0 0 1px rgba(0,0,0,0.08);"></div>
<div class="a" style="left:968px;top:632px;width:20px;height:20px;border-radius:50%;background:#d9d2e9;box-shadow:inset 0 0 0 1px rgba(0,0,0,0.08);"></div>
<div class="a" style="left:990px;top:632px;width:20px;height:20px;border-radius:50%;background:#ead1dc;box-shadow:inset 0 0 0 1px rgba(0,0,0,0.08);"></div>
<div class="a" style="left:792px;top:654px;width:20px;height:20px;border-radius:50%;background:#dd7e6b;"></div>
<div class="a" style="left:814px;top:654px;width:20px;height:20px;border-radius:50%;background:#ea9999;"></div>
<div class="a" style="left:836px;top:654px;width:20px;height:20px;border-radius:50%;background:#f9cb9c;"></div>
<div class="a" style="left:858px;top:654px;width:20px;height:20px;border-radius:50%;background:#ffe599;"></div>
<div class="a" style="left:880px;top:654px;width:20px;height:20px;border-radius:50%;background:#b6d7a8;"></div>
<div class="a" style="left:902px;top:654px;width:20px;height:20px;border-radius:50%;background:#a2c4c9;"></div>
<div class="a" style="left:924px;top:654px;width:20px;height:20px;border-radius:50%;background:#a4c2f4;"></div>
<div class="a" style="left:946px;top:654px;width:20px;height:20px;border-radius:50%;background:#9fc5e8;"></div>
<div class="a" style="left:968px;top:654px;width:20px;height:20px;border-radius:50%;background:#b4a7d6;"></div>
<div class="a" style="left:990px;top:654px;width:20px;height:20px;border-radius:50%;background:#d5a6bd;"></div>
<div class="a" style="left:792px;top:676px;width:20px;height:20px;border-radius:50%;background:#cc4125;"></div>
<div class="a" style="left:814px;top:676px;width:20px;height:20px;border-radius:50%;background:#e06666;"></div>
<div class="a" style="left:836px;top:676px;width:20px;height:20px;border-radius:50%;background:#f6b26b;"></div>
<div class="a" style="left:858px;top:676px;width:20px;height:20px;border-radius:50%;background:#ffd966;"></div>
<div class="a" style="left:880px;top:676px;width:20px;height:20px;border-radius:50%;background:#93c47d;"></div>
<div class="a" style="left:902px;top:676px;width:20px;height:20px;border-radius:50%;background:#76a5af;"></div>
<div class="a" style="left:924px;top:676px;width:20px;height:20px;border-radius:50%;background:#6d9eeb;"></div>
<div class="a" style="left:946px;top:676px;width:20px;height:20px;border-radius:50%;background:#6fa8dc;"></div>
<div class="a" style="left:968px;top:676px;width:20px;height:20px;border-radius:50%;background:#8e7cc3;"></div>
<div class="a" style="left:990px;top:676px;width:20px;height:20px;border-radius:50%;background:#c27ba0;"></div>
<div class="a" style="left:792px;top:698px;width:20px;height:20px;border-radius:50%;background:#a61c00;"></div>
<div class="a" style="left:814px;top:698px;width:20px;height:20px;border-radius:50%;background:#cc0000;"></div>
<div class="a" style="left:836px;top:698px;width:20px;height:20px;border-radius:50%;background:#e69138;"></div>
<div class="a" style="left:858px;top:698px;width:20px;height:20px;border-radius:50%;background:#f1c232;"></div>
<div class="a" style="left:880px;top:698px;width:20px;height:20px;border-radius:50%;background:#6aa84f;"></div>
<div class="a" style="left:902px;top:698px;width:20px;height:20px;border-radius:50%;background:#45818e;"></div>
<div class="a" style="left:924px;top:698px;width:20px;height:20px;border-radius:50%;background:#3c78d8;"></div>
<div class="a" style="left:946px;top:698px;width:20px;height:20px;border-radius:50%;background:#3d85c6;"></div>
<div class="a" style="left:968px;top:698px;width:20px;height:20px;border-radius:50%;background:#674ea7;"></div>
<div class="a" style="left:990px;top:698px;width:20px;height:20px;border-radius:50%;background:#a64d79;"></div>
<div class="a" style="left:792px;top:720px;width:20px;height:20px;border-radius:50%;background:#85200c;"></div>
<div class="a" style="left:814px;top:720px;width:20px;height:20px;border-radius:50%;background:#990000;"></div>
<div class="a" style="left:836px;top:720px;width:20px;height:20px;border-radius:50%;background:#b45f06;"></div>
<div class="a" style="left:858px;top:720px;width:20px;height:20px;border-radius:50%;background:#bf9000;"></div>
<div class="a" style="left:880px;top:720px;width:20px;height:20px;border-radius:50%;background:#38761d;"></div>
<div class="a" style="left:902px;top:720px;width:20px;height:20px;border-radius:50%;background:#134f5c;"></div>
<div class="a" style="left:924px;top:720px;width:20px;height:20px;border-radius:50%;background:#1155cc;"></div>
<div class="a" style="left:946px;top:720px;width:20px;height:20px;border-radius:50%;background:#0b5394;"></div>
<div class="a" style="left:968px;top:720px;width:20px;height:20px;border-radius:50%;background:#351c75;"></div>
<div class="a" style="left:990px;top:720px;width:20px;height:20px;border-radius:50%;background:#741b47;"></div>
<div class="a" style="left:792px;top:742px;width:20px;height:20px;border-radius:50%;background:#5b0f00;"></div>
<div class="a" style="left:814px;top:742px;width:20px;height:20px;border-radius:50%;background:#660000;"></div>
<div class="a" style="left:836px;top:742px;width:20px;height:20px;border-radius:50%;background:#783f04;"></div>
<div class="a" style="left:858px;top:742px;width:20px;height:20px;border-radius:50%;background:#7f6000;"></div>
<div class="a" style="left:880px;top:742px;width:20px;height:20px;border-radius:50%;background:#274e13;"></div>
<div class="a" style="left:902px;top:742px;width:20px;height:20px;border-radius:50%;background:#0c343d;"></div>
<div class="a" style="left:924px;top:742px;width:20px;height:20px;border-radius:50%;background:#1c4587;"></div>
<div class="a" style="left:946px;top:742px;width:20px;height:20px;border-radius:50%;background:#073763;"></div>
<div class="a" style="left:968px;top:742px;width:20px;height:20px;border-radius:50%;background:#20124d;"></div>
<div class="a" style="left:990px;top:742px;width:20px;height:20px;border-radius:50%;background:#4c1130;"></div>
<div class="t" style="left:796px;top:768px;font-size:11px;letter-spacing:0.1px;color:#3c4043">DESIGN</div>
<svg style="left:846px;top:764px" width="15" height="15" viewBox="0 0 24 24"><path fill="#5f6368" d="M3 17.25V21h3.75L17.81 9.94l-3.75-3.75L3 17.25zM20.71 7.04c.39-.39.39-1.02 0-1.41l-2.34-2.34c-.39-.39-1.02-.39-1.41 0l-1.83 1.83 3.75 3.75 1.83-1.83z"/></svg>
<div class="a" style="left:792px;top:789px;width:20px;height:20px;border-radius:50%;background:#000000;"></div>
<div class="a" style="left:814px;top:789px;width:20px;height:20px;border-radius:50%;background:#ffffff;box-shadow:inset 0 0 0 1px rgba(0,0,0,0.1);"></div>
<div class="a" style="left:836px;top:789px;width:20px;height:20px;border-radius:50%;background:#4285f4;"></div>
<div class="a" style="left:858px;top:789px;width:20px;height:20px;border-radius:50%;background:#ea4335;"></div>
<div class="a" style="left:880px;top:789px;width:20px;height:20px;border-radius:50%;background:#fbbc04;"></div>
<div class="a" style="left:902px;top:789px;width:20px;height:20px;border-radius:50%;background:#34a853;"></div>
<div class="a" style="left:924px;top:789px;width:20px;height:20px;border-radius:50%;background:#ff6d01;"></div>
<div class="a" style="left:946px;top:789px;width:20px;height:20px;border-radius:50%;background:#46bdc6;"></div>
<div class="a" style="left:792px;top:819px;width:222px;height:1px;background:#e8eaed"></div>
<div class="t" style="left:796px;top:833px;font-size:11px;letter-spacing:0.2px;color:#3c4043">BENUTZERDEFINIERT</div>
<div class="a" style="left:792px;top:855px;width:20px;height:20px;border-radius:50%;background:#b7e1cd"></div>
<svg style="left:816px;top:856.5px" width="16" height="16" viewBox="0 0 16 16"><circle cx="8" cy="8" r="6.8" stroke="#5f6368" stroke-width="1.6" fill="none"/><path d="M8 4.2V11.8M4.2 8H11.8" stroke="#5f6368" stroke-width="1.6"/></svg>
</body></html>
